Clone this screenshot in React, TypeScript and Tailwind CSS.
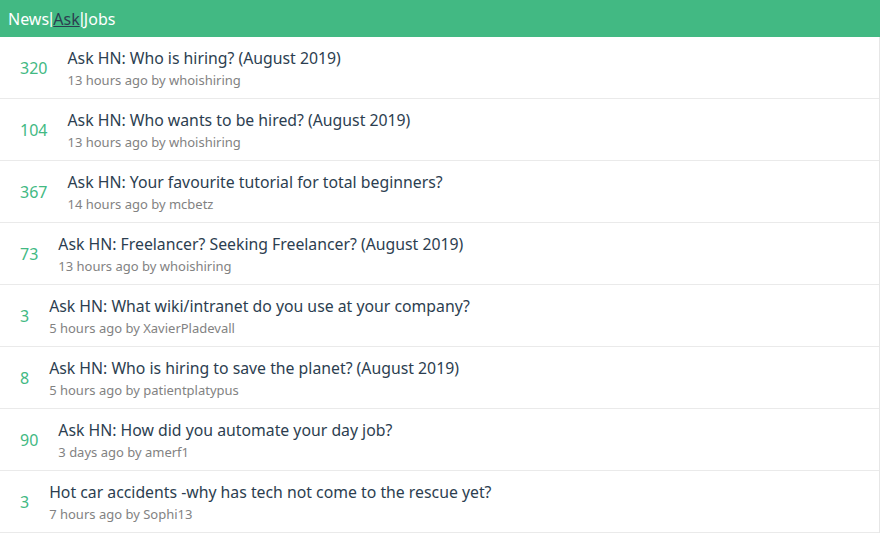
type Item = {
	score: number;
	title: string;
	time: string;
	by: string;
};

const items: Array<Item> = [
	{ score: 320, title: 'Ask HN: Who is hiring? (August 2019)', time: '13 hours ago', by: 'whoishiring' },
	{ score: 104, title: 'Ask HN: Who wants to be hired? (August 2019)', time: '13 hours ago', by: 'whoishiring' },
	{ score: 367, title: 'Ask HN: Your favourite tutorial for total beginners?', time: '14 hours ago', by: 'mcbetz' },
	{ score: 73, title: 'Ask HN: Freelancer? Seeking Freelancer? (August 2019)', time: '13 hours ago', by: 'whoishiring' },
	{ score: 3, title: 'Ask HN: What wiki/intranet do you use at your company?', time: '5 hours ago', by: 'XavierPladevall' },
	{ score: 8, title: 'Ask HN: Who is hiring to save the planet? (August 2019)', time: '5 hours ago', by: 'patientplatypus' },
	{ score: 90, title: 'Ask HN: How did you automate your day job?', time: '3 days ago', by: 'amerf1' },
	{ score: 3, title: 'Hot car accidents -why has tech not come to the rescue yet?', time: '7 hours ago', by: 'Sophi13' }
];

// narrow pipe, Liberation Sans has a thin advance
const Pipe = () => <span className="font-['Liberation_Sans',sans-serif]">|</span>;

const App = () => {
	return (
		<div className="w-[880px] h-[534px] bg-white font-['Noto_Sans',sans-serif] overflow-hidden">
			<header className="h-[37px] bg-[#42b983] flex items-center pl-2 text-white text-[16px]">
				<a>News</a>
				<Pipe />
				<a className="text-[#2c3e50] underline">Ask</a>
				<Pipe />
				<a>Jobs</a>
			</header>
			<ul className="w-[880px] border-r border-[#e6e6e6]">
				{items.map((item, i) => {
					return (
						<li key={i} className="h-[62px] flex items-center pl-5 border-b border-[#eaeaea]">
							<span className="text-[#42b983] text-[16px] mr-5 mt-[1px]">{item.score}</span>
							<div className="flex flex-col pt-[2px]">
								<span className="text-[#2c3e50] text-[15.8px] leading-[22px]">{item.title}</span>
								<span className="text-[#828282] text-[13px] leading-[22px]">
									{item.time} by {item.by}
								</span>
							</div>
						</li>
					);
				})}
			</ul>
		</div>
	);
};

export default App;
